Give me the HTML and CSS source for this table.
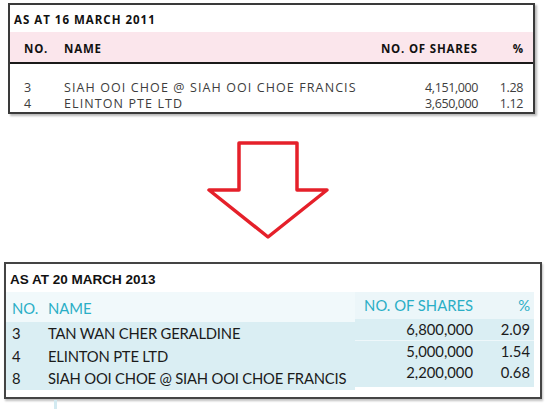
FILE: index.html
```html
<!DOCTYPE html>
<html>
<head>
<meta charset="utf-8">
<link rel="stylesheet" href="styles.css">
</head>
<body>
<div class="top">
  <div class="top-title">AS AT 16 MARCH 2011</div>
  <div class="top-grid top-head">
    <div>NO.</div><div>NAME</div><div class="r">NO. OF SHARES</div><div class="r">%</div>
  </div>
  <div class="top-body">
    <div class="top-grid top-row">
      <div>3</div><div class="nm">SIAH OOI CHOE @ SIAH OOI CHOE FRANCIS</div><div class="r num">4,151,000</div><div class="r num">1.28</div>
    </div>
    <div class="top-grid top-row">
      <div>4</div><div class="nm">ELINTON PTE LTD</div><div class="r num">3,650,000</div><div class="r num">1.12</div>
    </div>
  </div>
</div>

<svg class="arrow" width="545" height="148" viewBox="0 0 545 148">
  <polygon points="239,29 297,29 297,76 327,76 268,123 209,76 239,76" fill="none" stroke="#e5202a" stroke-width="3.5" stroke-linejoin="round"/>
</svg>

<div class="bottom">
  <div class="bot-title">AS AT 20 MARCH 2013</div>
  <div class="bot-cols">
    <div class="bot-left">
      <div class="bl-grid bl-head"><div>NO.</div><div>NAME</div></div>
      <div class="bl-body">
        <div class="bl-grid bl-row"><div>3</div><div class="nm">TAN WAN CHER GERALDINE</div></div>
        <div class="bl-grid bl-row"><div>4</div><div class="nm">ELINTON PTE LTD</div></div>
        <div class="bl-grid bl-row"><div>8</div><div class="nm">SIAH OOI CHOE @ SIAH OOI CHOE FRANCIS</div></div>
      </div>
    </div>
    <div class="bot-right">
      <div class="br-grid br-head"><div>NO. OF SHARES</div><div>%</div></div>
      <div class="br-body">
        <div class="br-grid br-row first"><div>6,800,000</div><div>2.09</div></div>
        <div class="br-grid br-row"><div>5,000,000</div><div>1.54</div></div>
        <div class="br-grid br-row"><div>2,200,000</div><div>0.68</div></div>
      </div>
    </div>
  </div>
</div>
<div class="tick"></div>
</body>
</html>
```
FILE: styles.css
```css
html, body {
  margin: 0;
  padding: 0;
  background: #ffffff;
}
body {
  width: 545px;
  height: 409px;
  overflow: hidden;
}

/* ---------- top table ---------- */
.top {
  margin: 3px 0 0 8px;
  width: 527px;
  box-sizing: border-box;
  border: 2px solid #3a3a3a;
  box-shadow: 2px 2px 2px rgba(0, 0, 0, 0.28);
  font-family: "Open Sans", "DejaVu Sans", sans-serif;
  color: #111;
}
.top-title {
  height: 27px;
  box-sizing: border-box;
  padding: 3px 0 0 4px;
  line-height: 24px;
  font-size: 11.5px;
  font-weight: 700;
  letter-spacing: 1px;
}
.top-grid {
  display: grid;
  grid-template-columns: 40px 1fr auto 45px;
  padding: 0 10px 0 14px;
}
.top-grid .r {
  text-align: right;
}
.top-head {
  background: #fbe6ec;
  height: 32px;
  box-sizing: border-box;
  padding-top: 4px;
  line-height: 26px;
  border-bottom: 2px solid #1a1a1a;
  font-size: 11.5px;
  font-weight: 700;
  letter-spacing: 0.8px;
}
.top-head .r:last-child {
  letter-spacing: 0;
}
.top-body {
  padding: 16px 0 0;
}
.top-row {
  line-height: 16px;
  font-size: 12.5px;
  color: #3d3d3d;
}
.top-row .nm {
  letter-spacing: 1.1px;
}
.top-row .num {
  letter-spacing: -0.4px;
}

/* ---------- arrow ---------- */
.arrow {
  display: block;
}

/* ---------- bottom table ---------- */
.bottom {
  margin-left: 4px;
  width: 538px;
  box-sizing: border-box;
  border: 2px solid #444;
  box-shadow: 1px 2px 2px rgba(0, 0, 0, 0.25);
  padding-bottom: 7px;
}
.bot-title {
  height: 28px;
  box-sizing: border-box;
  padding: 4px 0 0 4px;
  line-height: 24px;
  font-family: "Liberation Sans", Arial, sans-serif;
  font-weight: 700;
  font-size: 13.5px;
  color: #111;
}
.bot-cols {
  display: flex;
  align-items: flex-start;
  font-family: Lato, "Open Sans", sans-serif;
  font-size: 14.8px;
  color: #1b1b1b;
}
.bot-left {
  width: 349px;
}
.bl-grid {
  display: grid;
  grid-template-columns: 36px 1fr;
  padding-left: 6px;
}
.bl-head {
  height: 30px;
  box-sizing: border-box;
  padding-top: 2px;
  line-height: 28px;
  background: #f1f9fb;
  color: #2aaec6;
}
.bl-body {
  background: #daeef3;
  padding-bottom: 0.5px;
}
.bl-row {
  line-height: 22.5px;
}
.bl-row .nm {
  letter-spacing: -0.2px;
}
.bot-right {
  width: 179px;
  margin-right: 6px;
}
.br-grid {
  display: grid;
  grid-template-columns: 118px 57px;
  padding-right: 4px;
  text-align: right;
}
.br-head {
  height: 27px;
  line-height: 27px;
  background: #ecf6f9;
  color: #2aaec6;
}
.br-body {
  background: #daeef3;
  padding-bottom: 3.5px;
}
.br-row {
  line-height: 21.5px;
}
.br-row.first {
  box-shadow: inset 0 -1px 0 rgba(255, 255, 255, 0.55);
}
.tick {
  margin: 1px 0 0 54px;
  width: 3px;
  height: 10px;
  background: #d3eaf1;
}
```
